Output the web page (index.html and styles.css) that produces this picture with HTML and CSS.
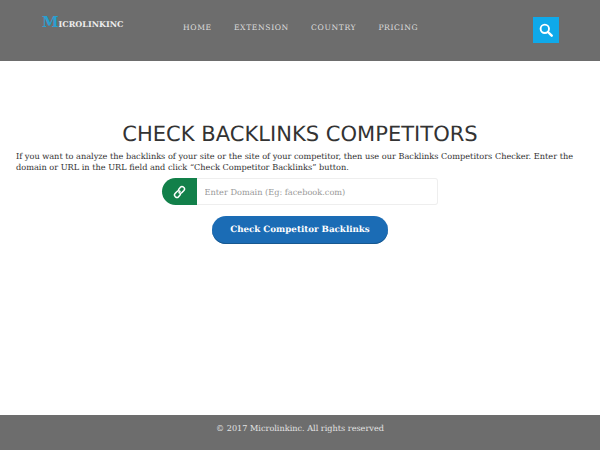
FILE: index.html
```html
<!DOCTYPE html>
<html lang="en">
<head>
    <meta charset="UTF-8">
    <title>Check Backlinks Competitors</title>
    <link rel="stylesheet" href="styles.css">
</head>
<body>
    <div class="header">
        <a class="logo" href="#"><span class="logo-first">M</span>icrolinkinc</a>
        <div class="nav">
            <a href="#">Home</a>
            <a href="#">Extension</a>
            <a href="#">Country</a>
            <a href="#">Pricing</a>
        </div>
        <button class="search-btn" type="button" aria-label="Search">
            <svg width="14" height="14" viewBox="0 0 14 14" fill="none" stroke="#fff">
                <circle cx="5.8" cy="5.8" r="4.2" stroke-width="1.9"/>
                <path d="M9 9l3.700 3.700" stroke-width="2.400" stroke-linecap="round"/>
            </svg>
        </button>
    </div>
    <div class="main-container">
        <h1>CHECK BACKLINKS COMPETITORS</h1>
        <p class="intro">If you want to analyze the backlinks of your site or the site of your competitor, then use our Backlinks Competitors Checker. Enter the domain or URL in the URL field and click “Check Competitor Backlinks” button.</p>
        <div class="domain-field">
            <span class="domain-icon">
                <svg width="13" height="14" viewBox="0 0 13 14" fill="none" stroke="#fff" stroke-width="1.500" stroke-linecap="round">
                    <path d="M5.600 4.400l1.800-2.100a2.200 2.200 0 0 1 3.100-.2l.2.200a2.200 2.200 0 0 1 .2 3.100L9 7.400a2.200 2.200 0 0 1-3 .3"/>
                    <path d="M7.400 9.600l-1.800 2.100a2.200 2.200 0 0 1-3.100.2l-.2-.2a2.200 2.200 0 0 1-.2-3.100L4 6.600a2.200 2.200 0 0 1 3-.3"/>
                </svg>
            </span>
            <input type="text" placeholder="Enter Domain (Eg: facebook.com)">
        </div>
        <button class="check-btn" type="button">Check Competitor Backlinks</button>
    </div>
    <div class="footer">© 2017 Microlinkinc. All rights reserved</div>
</body>
</html>
```

FILE: styles.css
```css
html, body {
    height: 100%;
}
body {
    margin: 0;
    display: flex;
    flex-direction: column;
    background: #fff;
    color: #333;
    font-family: 'DejaVu Serif', serif;
    font-size: 8.15px;
    text-rendering: geometricPrecision;
}
.header {
    height: 61px;
    box-sizing: border-box;
    flex-shrink: 0;
    display: flex;
    align-items: flex-start;
    padding: 0 41px 0 42px;
    background: #6d6d6d;
}
.logo {
    width: 141px;
    margin-top: 14px;
    color: #eee;
    font-size: 10.9px;
    font-weight: 700;
    font-variant: small-caps;
    line-height: 16px;
    text-decoration: none;
}
.logo-first {
    color: #2a9fd0;
    font-size: 15px;
}
.nav {
    display: flex;
    gap: 22.2px;
    margin-top: 21.5px;
}
.nav a {
    color: #ddd;
    font-size: 7.65px;
    letter-spacing: 0.6px;
    line-height: 12px;
    text-decoration: none;
    text-transform: uppercase;
}
.search-btn {
    width: 26px;
    height: 26px;
    margin: 17px 0 0 auto;
    padding: 0;
    display: flex;
    align-items: center;
    justify-content: center;
    border: none;
    background: #0fa9ea;
}
.main-container {
    flex: 1;
    padding: 60px 16px 0 16px;
    text-align: center;
}
h1 {
    margin: 0;
    color: #333;
    font-family: 'DejaVu Sans', sans-serif;
    font-size: 21.05px;
    font-weight: 400;
    line-height: 26px;
}
.intro {
    margin: 4px 0 0 0;
    font-size: 8.19px;
    line-height: 10.5px;
    text-align: left;
}
.domain-field {
    display: flex;
    width: 276px;
    height: 27px;
    margin: 6px auto 0 auto;
}
.domain-icon {
    width: 35px;
    display: flex;
    align-items: center;
    justify-content: center;
    background: #12804a;
    border-radius: 14px 0 0 14px;
}
.domain-field input {
    flex: 1;
    min-width: 0;
    box-sizing: border-box;
    padding: 0 7.500px;
    border: 1px solid #eee;
    border-left: none;
    border-radius: 0 3px 3px 0;
    outline: none;
    font-family: inherit;
    font-size: 8.2px;
    text-rendering: geometricPrecision;
}
.domain-field input::placeholder {
    color: #999;
}
.check-btn {
    display: block;
    width: 176px;
    height: 28px;
    margin: 11px auto 0 auto;
    padding: 0;
    border: none;
    border-radius: 14px;
    background: #1b6cb5;
    box-shadow: inset 0 -1px 0 #17588f;
    color: #fff;
    font-family: inherit;
    font-size: 8.7px;
    font-weight: 700;
    text-rendering: geometricPrecision;
}
.footer {
    height: 35px;
    box-sizing: border-box;
    flex-shrink: 0;
    padding-top: 6.5px;
    background: #6d6d6d;
    color: #e2e2e2;
    line-height: 12px;
    text-align: center;
}
```
